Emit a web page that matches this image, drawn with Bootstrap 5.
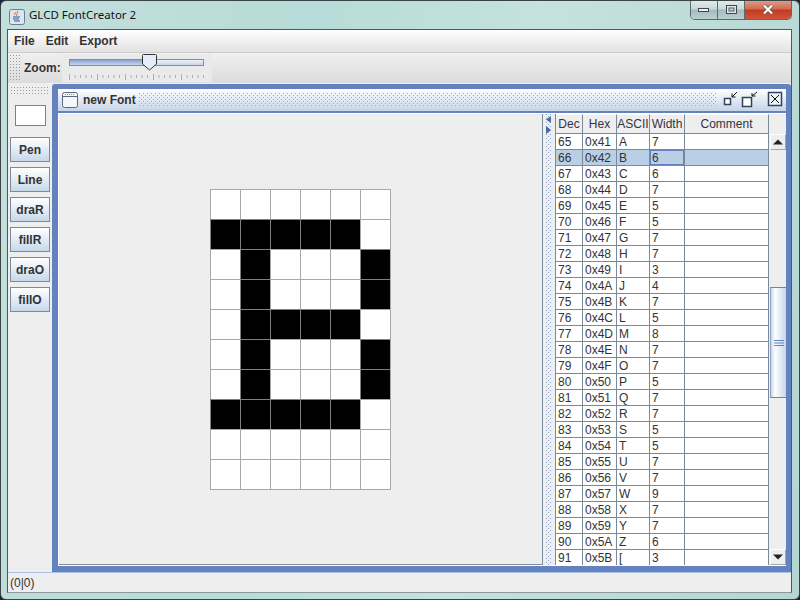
<!DOCTYPE html>
<html><head><meta charset="utf-8"><title>GLCD FontCreator 2</title>
<link rel="stylesheet" href="https://cdn.jsdelivr.net/npm/bootstrap@5.3.0/dist/css/bootstrap.min.css">
<style>
html,body{width:800px;height:600px;margin:0;overflow:hidden;background:#223}
body{font:12px/1 "Liberation Sans",Arial,sans-serif;color:#333}
.shell{width:800px;height:600px;border:1px solid #3a4444;border-radius:6px;background:linear-gradient(100deg,#c3dfdc 0,#b8dcd9 35%,#c4e2df 60%,#b5d6d3 100%);overflow:hidden}
.titlebar{height:28px;padding-left:8px;flex:none}
.japp{width:16px;height:16px;margin-top:3px}
.wintitle{font:11.5px "Noto Sans","Open Sans",sans-serif;margin-left:4px;color:#111;margin-top:-1px}
.wctl{height:20px;margin-right:7px;margin-top:-1px;border:1px solid #5b6a6a;border-top:0;border-radius:0 0 5px 5px;overflow:hidden}
.wbtn{height:19px;width:27px;background:linear-gradient(#dfeceb 0,#c6dad9 48%,#a5bcbc 52%,#b8d0d0 100%);border-right:1px solid #5b6a6a}
.wclose{width:46px;background:linear-gradient(#e2a090 0,#d06a50 48%,#c23a20 52%,#d0553a 100%);border-right:0}
.client{width:785px;height:564px;flex:none;margin-left:6px;border:1px solid #4a5a5c;border-bottom-color:#8a9a9c;background:#eee}
.menubar{height:23px;flex:none;padding-left:6px;background:linear-gradient(#fff,#e2e2e2);border-bottom:1px solid #ccc;font-weight:700;gap:11px}
.toolb{height:31px;flex:none;background:linear-gradient(#f0f0f0,#dcdcdc);padding:1px 0 0 2px;border-bottom:1px solid #eee}
.bump{background:radial-gradient(circle at .5px .5px,#999 .7px,transparent .8px) 0 0/3px 3px}
.grip{width:10px;height:25px;margin-top:1px}
.zoomlbl{font-weight:700;margin-left:4px;width:38px;padding-top:8px}
.slidebox{width:150px;height:28px;background:#eaeaea;padding:5px 0 0 7px}
.strack{width:135px;height:7px;border:1px solid #7d8fa8;background:linear-gradient(#eef2f8,#c9d4e6)}
.sfill{width:75px;height:5px;background:linear-gradient(#88a3d0,#c6d6ec)}
.sknob{top:-6px;left:72px;position:absolute}
.stage{height:488px;flex:none}
.leftbar{width:44px;padding:3px 2px 0 2px}
.lbump{height:7px;margin:0 1px 0 1px}
.colorbox{width:31px;height:21px;background:#fff;border:1px solid #808080;margin:11px 0 11px 5px}
.toolbtn{width:40px;height:25px;font:700 12px "Liberation Sans",Arial,sans-serif;color:#333;border:1px solid #7a8a99;border-radius:0;background:linear-gradient(#fff,#c6d8ea);padding:0;margin-bottom:5px}
.iframe{width:739px;height:488px;background:#6382bf;border-radius:3px 3px 0 0;padding:5px 5px 6px 6px}
.ftitle{height:22px;flex:none;margin-bottom:2px;background:linear-gradient(#fff,#c4d4e8);padding-left:4px}
.fname{font-weight:700;margin:0 3px 0 5px}
.fdots{height:14px;width:578px;background:radial-gradient(circle at .5px .5px,#8fa5cc .7px,transparent .8px) 0 0/4px 4px,radial-gradient(circle at 2.5px 2.5px,#8fa5cc .7px,transparent .8px) 0 0/4px 4px}
.fbody{height:453px;flex:none;background:#fff;padding:1px 0 1px 1px}
.canvas{width:484px;background:#eee;border-right:1px solid #808c96;border-bottom:1px solid #808c96}
.pix{display:grid;grid-template-columns:repeat(6,30px);grid-auto-rows:30px;border-right:1px solid #a8a8a8;border-bottom:1px solid #a8a8a8}
.pix i{background:#fff;border-left:1px solid #a8a8a8;border-top:1px solid #a8a8a8}
.pix i.on{background:#000;border-color:#808080}
.split{width:12px;background:#eee;position:relative}
.splitdots{width:6px;margin-left:3px;height:100%;background:radial-gradient(circle at .5px .5px,#8fa5cc .7px,transparent .8px) 0 0/4px 4px,radial-gradient(circle at 2.5px 2.5px,#8fa5cc .7px,transparent .8px) 0 0/4px 4px}
.splitar{position:absolute;left:2px;top:1px}
.gridwrap{width:231px;background:#eee;height:451px;overflow:hidden}
.fgrid{table-layout:fixed;border-collapse:separate;border-spacing:0;width:214px;margin:0;border-left:1px solid #7a8a99;align-self:flex-start}
.fgrid th{height:20px;font-weight:400;text-align:center;background:#eee;border-right:1px solid #7a8a99;border-bottom:1px solid #7a8a99;border-top:1px solid #fff;padding:0;color:#334}
.fgrid td{height:16px;padding:0 0 0 2px;background:#fff;border-right:1px solid #7a8a99;border-bottom:1px solid #7a8a99;color:#333;overflow:hidden}
.fgrid tr.sel td{background:#b8cfe5}
.fgrid td.foc{box-shadow:inset 0 0 0 1px #6382bf}
.scroller{width:16px;margin:20px 0 0 1px}
.sbtn{height:16px;flex:none;background:#eee;border:1px solid #fff;border-right-color:#a8a8a8;border-bottom-color:#a8a8a8}
.strk1{height:137px;flex:none;background:#eee}
.sthumb{height:111px;flex:none;background:linear-gradient(90deg,#c4d4ea,#fff 25%,#c6d6ea);border-top:1px solid #6382bf;border-bottom:1px solid #6382bf;border-left:1px solid #8fa5cc}
.strk2{height:151px;flex:none;background:#eee}
.status{height:20px;flex:none;border-top:1px solid #a9c4e4;padding:4px 0 0 2px;background:#eee}
</style></head>
<body>
<div class="shell d-flex flex-column">
 <div class="titlebar d-flex justify-content-between">
  <div class="d-flex align-items-center">
   <svg class="japp" viewBox="0 0 16 16"><rect x=".5" y=".5" width="15" height="15" rx="2" fill="#dce6ee" stroke="#6b7f95"/><path d="M8 2c2 2-2 3 0 5M6 3c1 1-1 2 0 3" stroke="#e0641e" fill="none"/><path d="M4 8h7M4 10h6M5 12h6" stroke="#33599a"/></svg>
   <span class="wintitle">GLCD FontCreator 2</span>
  </div>
  <div class="wctl d-flex">
   <div class="wbtn d-flex align-items-center justify-content-center"><svg width="12" height="6"><rect x=".5" y="1.5" width="10" height="3" fill="#eef" stroke="#445"/></svg></div>
   <div class="wbtn d-flex align-items-center justify-content-center"><svg width="11" height="10"><rect x=".5" y=".5" width="10" height="8" fill="#dfe8e8" stroke="#445"/><rect x="3" y="3" width="5" height="3" fill="#c6dada" stroke="#556"/></svg></div>
   <div class="wbtn wclose d-flex align-items-center justify-content-center"><svg width="14" height="11"><path d="M3 1.5l8 8M11 1.5l-8 8" stroke="#555" stroke-width="3.4"/><path d="M3 1.5l8 8M11 1.5l-8 8" stroke="#fff" stroke-width="2.2"/></svg></div>
  </div>
 </div>
 <div class="client d-flex flex-column">
  <div class="menubar d-flex align-items-center"><span>File</span><span>Edit</span><span>Export</span></div>
  <div class="toolb d-flex">
   <div class="grip bump"></div>
   <div class="zoomlbl">Zoom:</div>
   <div class="slidebox">
    <div class="strack position-relative"><div class="sfill"></div>
     <svg class="sknob" width="16" height="17" viewBox="0 0 16 17"><path d="M.5 1.5q0-1 1-1h12q1 0 1 1V10l-7 6-7-6z" fill="#e4eefa" stroke="#333"/></svg>
    </div>
    <svg class="d-block mt-2" width="136" height="8"><path d="M0.5 0v6M6 1v3M11.5 1v3M17 1v3M22.5 1v3M28.5 0v6M34 1v3M39.5 1v3M45 1v3M50.5 1v3M56.5 0v6M62 1v3M67.500 1v3M73 1v3M78.5 1v3M84.5 0v6M90 1v3M95.5 1v3M101 1v3M106.5 1v3M112.5 0v6M118 1v3M123.5 1v3M129 1v3M134.5 1v3" stroke="#a6b0bc"/></svg>
   </div>
  </div>
  <div class="stage d-flex">
   <div class="leftbar d-flex flex-column">
    <div class="lbump bump"></div>
    <div class="colorbox"></div>
    <button class="btn toolbtn">Pen</button>
    <button class="btn toolbtn">Line</button>
    <button class="btn toolbtn">draR</button>
    <button class="btn toolbtn">fillR</button>
    <button class="btn toolbtn">draO</button>
    <button class="btn toolbtn">fillO</button>
   </div>
   <div class="iframe d-flex flex-column">
    <div class="ftitle d-flex align-items-center">
     <svg width="16" height="16" viewBox="0 0 16 16"><rect x=".5" y=".5" width="15" height="15" rx="2" fill="#f4f6fa" stroke="#5a6a80"/><path d="M1 4.5h14" stroke="#5a6a80"/><path d="M3 2.5h10" stroke="#8090a8" stroke-dasharray="1 1"/></svg>
     <span class="fname">new Font</span>
     <div class="fdots"></div>
     <div class="d-flex align-items-center ms-auto">
      <svg width="64" height="22" viewBox="0 -3 64 22"><rect x="2.5" y="6.5" width="6" height="6" fill="#fff" stroke="#33415c" stroke-width="1.500"/><path d="M10 5l5-5M10 1.500V5h3.500" stroke="#111" fill="none"/><rect x="20.500" y="5.500" width="9" height="9" fill="#fff" stroke="#33415c" stroke-width="1.500"/><path d="M30 4l5-4M30 1v3h3.500" stroke="#111" fill="none"/><rect x="46.500" y=".5" width="13" height="13" fill="#eef3fa" stroke="#33415c" stroke-width="1.500"/><path d="M49 3l8 8M57 3l-8 8" stroke="#111"/></svg>
     </div>
    </div>
    <div class="fbody d-flex">
     <div class="canvas d-flex align-items-center justify-content-center">
      <div class="pix">
       <i></i><i></i><i></i><i></i><i></i><i></i>
       <i class="on"></i><i class="on"></i><i class="on"></i><i class="on"></i><i class="on"></i><i></i>
       <i></i><i class="on"></i><i></i><i></i><i></i><i class="on"></i>
       <i></i><i class="on"></i><i></i><i></i><i></i><i class="on"></i>
       <i></i><i class="on"></i><i class="on"></i><i class="on"></i><i class="on"></i><i></i>
       <i></i><i class="on"></i><i></i><i></i><i></i><i class="on"></i>
       <i></i><i class="on"></i><i></i><i></i><i></i><i class="on"></i>
       <i class="on"></i><i class="on"></i><i class="on"></i><i class="on"></i><i class="on"></i><i></i>
       <i></i><i></i><i></i><i></i><i></i><i></i>
       <i></i><i></i><i></i><i></i><i></i><i></i>
      </div>
     </div>
     <div class="split"><div class="splitdots"></div>
      <svg class="splitar" width="7" height="20" viewBox="0 0 7 20"><path d="M6 1v7L1 4.500z" fill="#4a6a9a"/><path d="M1 11v8l5-4z" fill="#4a6a9a"/></svg>
     </div>
     <div class="gridwrap d-flex">
      <table class="fgrid">
       <colgroup><col style="width:27px"><col style="width:34px"><col style="width:33px"><col style="width:35px"><col style="width:84px"></colgroup>
       <thead><tr><th>Dec</th><th>Hex</th><th>ASCII</th><th>Width</th><th>Comment</th></tr></thead>
       <tbody>
<tr><td>65</td><td>0x41</td><td>A</td><td>7</td><td></td></tr>
<tr class="sel"><td>66</td><td>0x42</td><td>B</td><td class="foc">6</td><td></td></tr>
<tr><td>67</td><td>0x43</td><td>C</td><td>6</td><td></td></tr>
<tr><td>68</td><td>0x44</td><td>D</td><td>7</td><td></td></tr>
<tr><td>69</td><td>0x45</td><td>E</td><td>5</td><td></td></tr>
<tr><td>70</td><td>0x46</td><td>F</td><td>5</td><td></td></tr>
<tr><td>71</td><td>0x47</td><td>G</td><td>7</td><td></td></tr>
<tr><td>72</td><td>0x48</td><td>H</td><td>7</td><td></td></tr>
<tr><td>73</td><td>0x49</td><td>I</td><td>3</td><td></td></tr>
<tr><td>74</td><td>0x4A</td><td>J</td><td>4</td><td></td></tr>
<tr><td>75</td><td>0x4B</td><td>K</td><td>7</td><td></td></tr>
<tr><td>76</td><td>0x4C</td><td>L</td><td>5</td><td></td></tr>
<tr><td>77</td><td>0x4D</td><td>M</td><td>8</td><td></td></tr>
<tr><td>78</td><td>0x4E</td><td>N</td><td>7</td><td></td></tr>
<tr><td>79</td><td>0x4F</td><td>O</td><td>7</td><td></td></tr>
<tr><td>80</td><td>0x50</td><td>P</td><td>5</td><td></td></tr>
<tr><td>81</td><td>0x51</td><td>Q</td><td>7</td><td></td></tr>
<tr><td>82</td><td>0x52</td><td>R</td><td>7</td><td></td></tr>
<tr><td>83</td><td>0x53</td><td>S</td><td>5</td><td></td></tr>
<tr><td>84</td><td>0x54</td><td>T</td><td>5</td><td></td></tr>
<tr><td>85</td><td>0x55</td><td>U</td><td>7</td><td></td></tr>
<tr><td>86</td><td>0x56</td><td>V</td><td>7</td><td></td></tr>
<tr><td>87</td><td>0x57</td><td>W</td><td>9</td><td></td></tr>
<tr><td>88</td><td>0x58</td><td>X</td><td>7</td><td></td></tr>
<tr><td>89</td><td>0x59</td><td>Y</td><td>7</td><td></td></tr>
<tr><td>90</td><td>0x5A</td><td>Z</td><td>6</td><td></td></tr>
<tr><td>91</td><td>0x5B</td><td>[</td><td>3</td><td></td></tr>
       </tbody>
      </table>
      <div class="scroller d-flex flex-column">
       <div class="sbtn d-flex align-items-center justify-content-center"><svg width="10" height="6"><path d="M0 5.500L5 .5l5 5z" fill="#222"/></svg></div>
       <div class="strk1"></div>
       <div class="sthumb d-flex align-items-center justify-content-center"><svg width="10" height="6"><path d="M0 .5h10M0 3h10M0 5.500h10" stroke="#6382bf"/></svg></div>
       <div class="strk2"></div>
       <div class="sbtn d-flex align-items-center justify-content-center"><svg width="10" height="6"><path d="M0 .5L5 5.500l5-5z" fill="#222"/></svg></div>
      </div>
     </div>
    </div>
   </div>
  </div>
  <div class="status">(0|0)</div>
 </div>
</div>
<script src="https://cdn.jsdelivr.net/npm/bootstrap@5.3.0/dist/js/bootstrap.bundle.min.js"></script>
</body></html>
